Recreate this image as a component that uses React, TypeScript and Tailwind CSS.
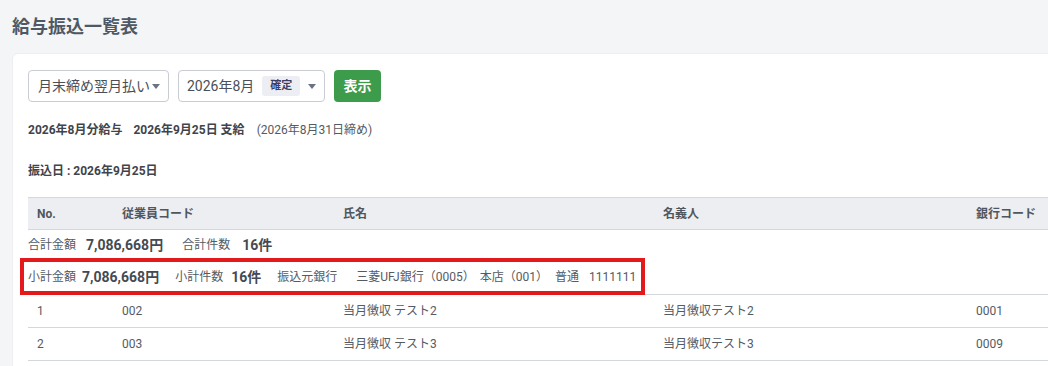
import React from "react";

const font = { fontFamily: '"Roboto", "Noto Sans CJK JP", sans-serif' };

function Caret() {
  return (
    <svg viewBox="0 0 10 6" className="h-[5px] w-[8px]" aria-hidden="true">
      <path d="M0 0h10L5 6z" fill="#6b7280" />
    </svg>
  );
}

const cols = "grid grid-cols-[85px_221px_320px_313px_200px]";

const rows = [
  { no: "1", code: "002", name: "当月徴収 テスト2", holder: "当月徴収テスト2", bank: "0001" },
  { no: "2", code: "003", name: "当月徴収 テスト3", holder: "当月徴収テスト3", bank: "0009" },
];

export default function App() {
  return (
    <div className="h-[366px] w-[1048px] overflow-hidden bg-[#f4f5f7] text-[#4a4f57]" style={font}>
      <h1 className="px-3 pt-[14px] text-[18px] font-bold leading-[26px] text-[#4f5965]">給与振込一覧表</h1>

      <div className="ml-3 mt-[13px] w-[1100px] rounded-md border border-[#eceef1] bg-white pl-[15px] pr-4 pt-4 pb-10">
        {/* 検索条件 */}
        <div className="flex items-center gap-[9px]">
          <div className="flex h-[32px] w-[141px] items-center justify-between rounded border border-[#c9cdd3] pl-[9px] pr-[8px] text-[14px] text-[#4a4f57]">
            <span>月末締め翌月払い</span>
            <Caret />
          </div>
          <div className="flex h-[32px] w-[147px] items-center justify-between rounded border border-[#c9cdd3] pl-[8px] pr-[8px] text-[14px] text-[#4a4f57]">
            <span className="flex items-center gap-[8px]">
              2026年8月
              <span className="rounded-[3px] bg-[#eceef3] px-[8px] py-[1px] text-[11px] font-bold leading-[18px] text-[#3a3d66]">確定</span>
            </span>
            <Caret />
          </div>
          <button className="h-[32px] w-[47px] rounded bg-[#3d9c4c] text-[14px] font-bold text-white">表示</button>
        </div>

        <p className="mt-[19px] text-[12px] leading-[18px] text-[#3f444b]">
          <span className="font-bold">2026年8月分給与</span>
          <span className="ml-[11px] font-bold">2026年9月25日 支給</span>
          <span className="ml-[12px] text-[#555b63]">(2026年8月31日締め)</span>
        </p>

        <p className="mt-[23px] text-[12px] font-bold leading-[18px] text-[#3f444b]">振込日 : 2026年9月25日</p>

        {/* テーブル */}
        <div className="mt-[17px] text-[12px]">
          <div className={`${cols} h-[33px] items-center border-y border-[#d4d7dd] bg-[#eceef2] font-bold text-[#50565e]`}>
            <div className="pl-[9px]">No.</div>
            <div className="pl-[9px]">従業員コード</div>
            <div className="pl-[9px]">氏名</div>
            <div className="pl-[9px]">名義人</div>
            <div className="pl-[9px]">銀行コード</div>
          </div>

          <div className="flex h-[30px] items-center text-[#555b63]">
            <span>合計金額</span>
            <span className="ml-[10px] text-[14px] font-bold text-[#454a52]">7,086,668円</span>
            <span className="ml-[19px]">合計件数</span>
            <span className="ml-[12px] text-[14px] font-bold text-[#454a52]">16件</span>
          </div>

          <div className="relative flex h-[35px] items-center border-b border-[#d4d7dd] text-[#555b63]">
            <span>小計金額</span>
            <span className="ml-[6px] text-[14px] font-bold text-[#454a52]">7,086,668円</span>
            <span className="ml-[16px]">小計件数</span>
            <span className="ml-[8px] text-[14px] font-bold text-[#454a52]">16件</span>
            <span className="ml-[16px]">振込元銀行</span>
            <span className="ml-[19px]">三菱UFJ銀行（0005）</span>
            <span className="ml-[5px]">本店（001）</span>
            <span className="ml-[7px]">普通</span>
            <span className="ml-[10px]">1111111</span>
            <div className="absolute -left-[8px] -top-[2px] h-[37px] w-[625px] border-4 border-[#e3191c]" />
          </div>

          {rows.map((r) => (
            <div key={r.no} className={`${cols} h-[33px] items-center border-b border-[#d4d7dd] text-[#555b63]`}>
              <div className="pl-[9px]">{r.no}</div>
              <div className="pl-[9px]">{r.code}</div>
              <div className="pl-[9px]">{r.name}</div>
              <div className="pl-[9px]">{r.holder}</div>
              <div className="pl-[9px]">{r.bank}</div>
            </div>
          ))}
        </div>
      </div>
    </div>
  );
}
